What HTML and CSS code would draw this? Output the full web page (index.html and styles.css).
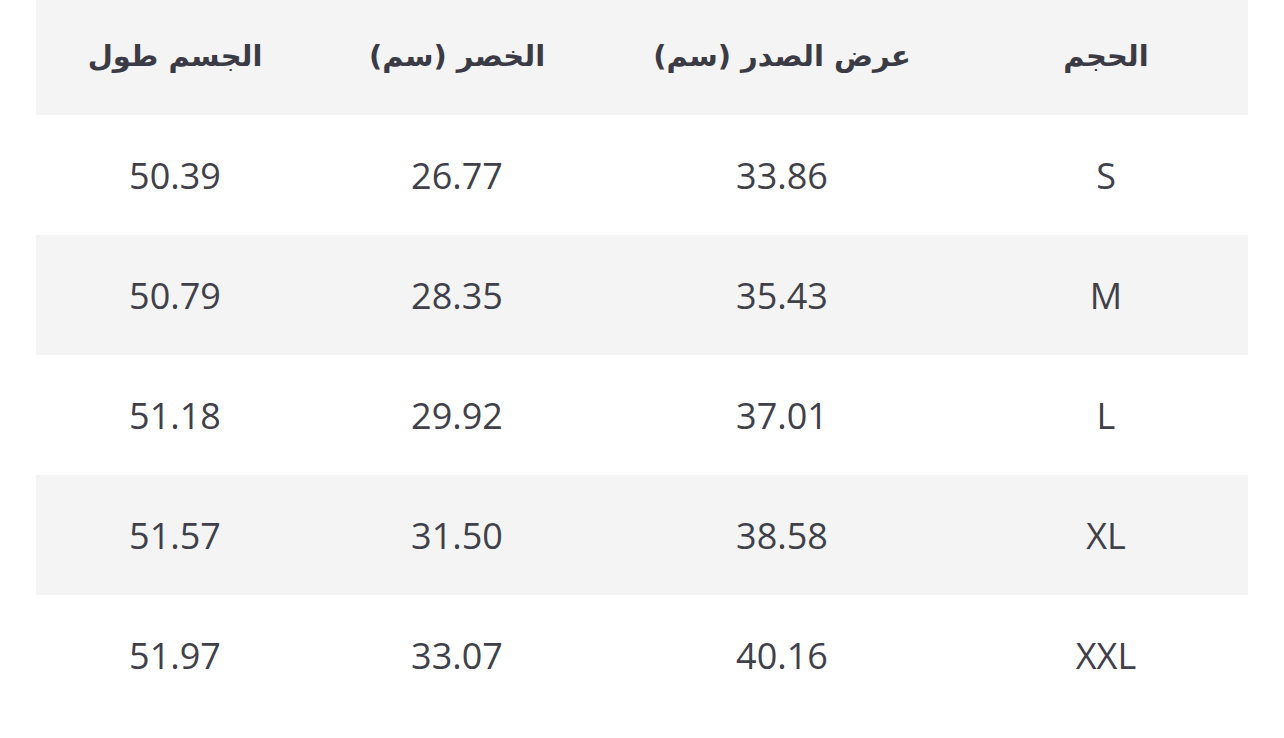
FILE: index.html
```html
<!DOCTYPE html>
<html lang="ar" dir="rtl">
<head>
<meta charset="utf-8">
<link rel="stylesheet" href="styles.css">
</head>
<body>
<table class="size-table">
  <colgroup>
    <col class="c1"><col class="c2"><col class="c3"><col class="c4">
  </colgroup>
  <thead>
    <tr class="head"><th>الحجم</th><th>عرض الصدر (سم)</th><th>الخصر (سم)</th><th>الجسم طول</th></tr>
  </thead>
  <tbody>
    <tr><td>S</td><td>33.86</td><td>26.77</td><td>50.39</td></tr>
    <tr class="alt"><td>M</td><td>35.43</td><td>28.35</td><td>50.79</td></tr>
    <tr><td>L</td><td>37.01</td><td>29.92</td><td>51.18</td></tr>
    <tr class="alt"><td>XL</td><td>38.58</td><td>31.50</td><td>51.57</td></tr>
    <tr><td>XXL</td><td>40.16</td><td>33.07</td><td>51.97</td></tr>
  </tbody>
</table>
</body>
</html>
```
FILE: styles.css
```css
html, body {
  margin: 0;
  padding: 0;
  background: #ffffff;
}
body {
  padding: 0 36px;
  font-family: "Open Sans", "DejaVu Sans", sans-serif;
  color: #3e3e48;
}
.size-table {
  width: 1212px;
  border-collapse: collapse;
  table-layout: fixed;
}
.c1 { width: 284px; }
.c2 { width: 364px; }
.c3 { width: 286px; }
.c4 { width: 278px; }
.head {
  background: #f4f4f4;
  height: 115px;
}
.head th {
  font-family: "DejaVu Sans", sans-serif;
  font-weight: bold;
  font-size: 29px;
  text-align: center;
  padding: 0 0 4px 0;
  color: #3b3b45;
}
tbody tr {
  height: 120px;
}
tbody tr.alt {
  background: #f4f4f4;
}
tbody td {
  text-align: center;
  font-size: 36px;
  padding: 0;
  color: #40404a;
}
```
